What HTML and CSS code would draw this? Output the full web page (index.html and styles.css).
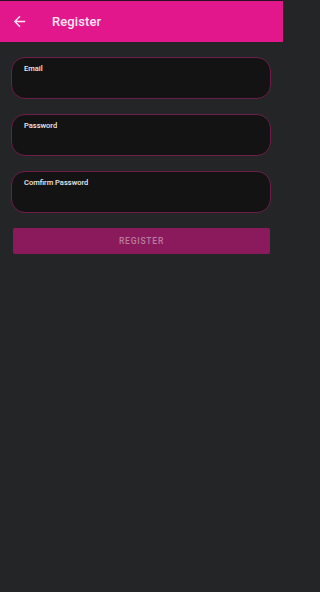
FILE: index.html
```html
<!DOCTYPE html>
<html>
<head>
<meta charset="utf-8">
<link rel="stylesheet" href="styles.css">
</head>
<body>
<header class="appbar">
  <svg class="back" viewBox="0 0 24 24" width="17" height="17"><path d="M20 11H7.83l5.59-5.59L12 4l-8 8 8 8 1.41-1.41L7.83 13H20v-2z" fill="currentColor"/></svg>
  <span class="title">Register</span>
</header>
<main class="form">
  <div class="field"><span class="label">Email</span></div>
  <div class="field"><span class="label">Password</span></div>
  <div class="field"><span class="label">Comfirm Password</span></div>
  <button class="btn">REGISTER</button>
</main>
</body>
</html>
```
FILE: styles.css
```css
html { background: #232527; }
html, body { margin: 0; padding: 0; }
body {
  width: 283px;
  height: 592px;
  background: #232527;
  font-family: Roboto, "Liberation Sans", sans-serif;
  overflow: hidden;
}
.appbar {
  height: 42px;
  box-sizing: border-box;
  border-top: 1px solid #2a1020;
  background: #e3178c;
  display: flex;
  align-items: center;
  padding-left: 11px;
  color: #fbe6f2;
}
.back { display: block; margin-right: 24px; }
.title { font-size: 13px; font-weight: 500; letter-spacing: 0.1px; }
.form {
  display: flex;
  flex-direction: column;
  padding: 15px 12px 0 11px;
}
.field {
  height: 42px;
  box-sizing: border-box;
  border: 1px solid #6e1d4a;
  border-radius: 14px;
  background: #141314;
  padding: 6px 12px;
  margin-bottom: 15px;
}
.label { color: #eeeaec; font-size: 7.5px; font-weight: 500; display: block; }
.btn {
  margin: 0 1px 0 2px;
  height: 26px;
  border: none;
  border-radius: 2px;
  background: #8b1a5c;
  color: #b97d9e;
  font-family: Roboto, "Liberation Sans", sans-serif;
  font-size: 8.5px;
  font-weight: 500;
  letter-spacing: 0.8px;
  padding: 0;
}
```
